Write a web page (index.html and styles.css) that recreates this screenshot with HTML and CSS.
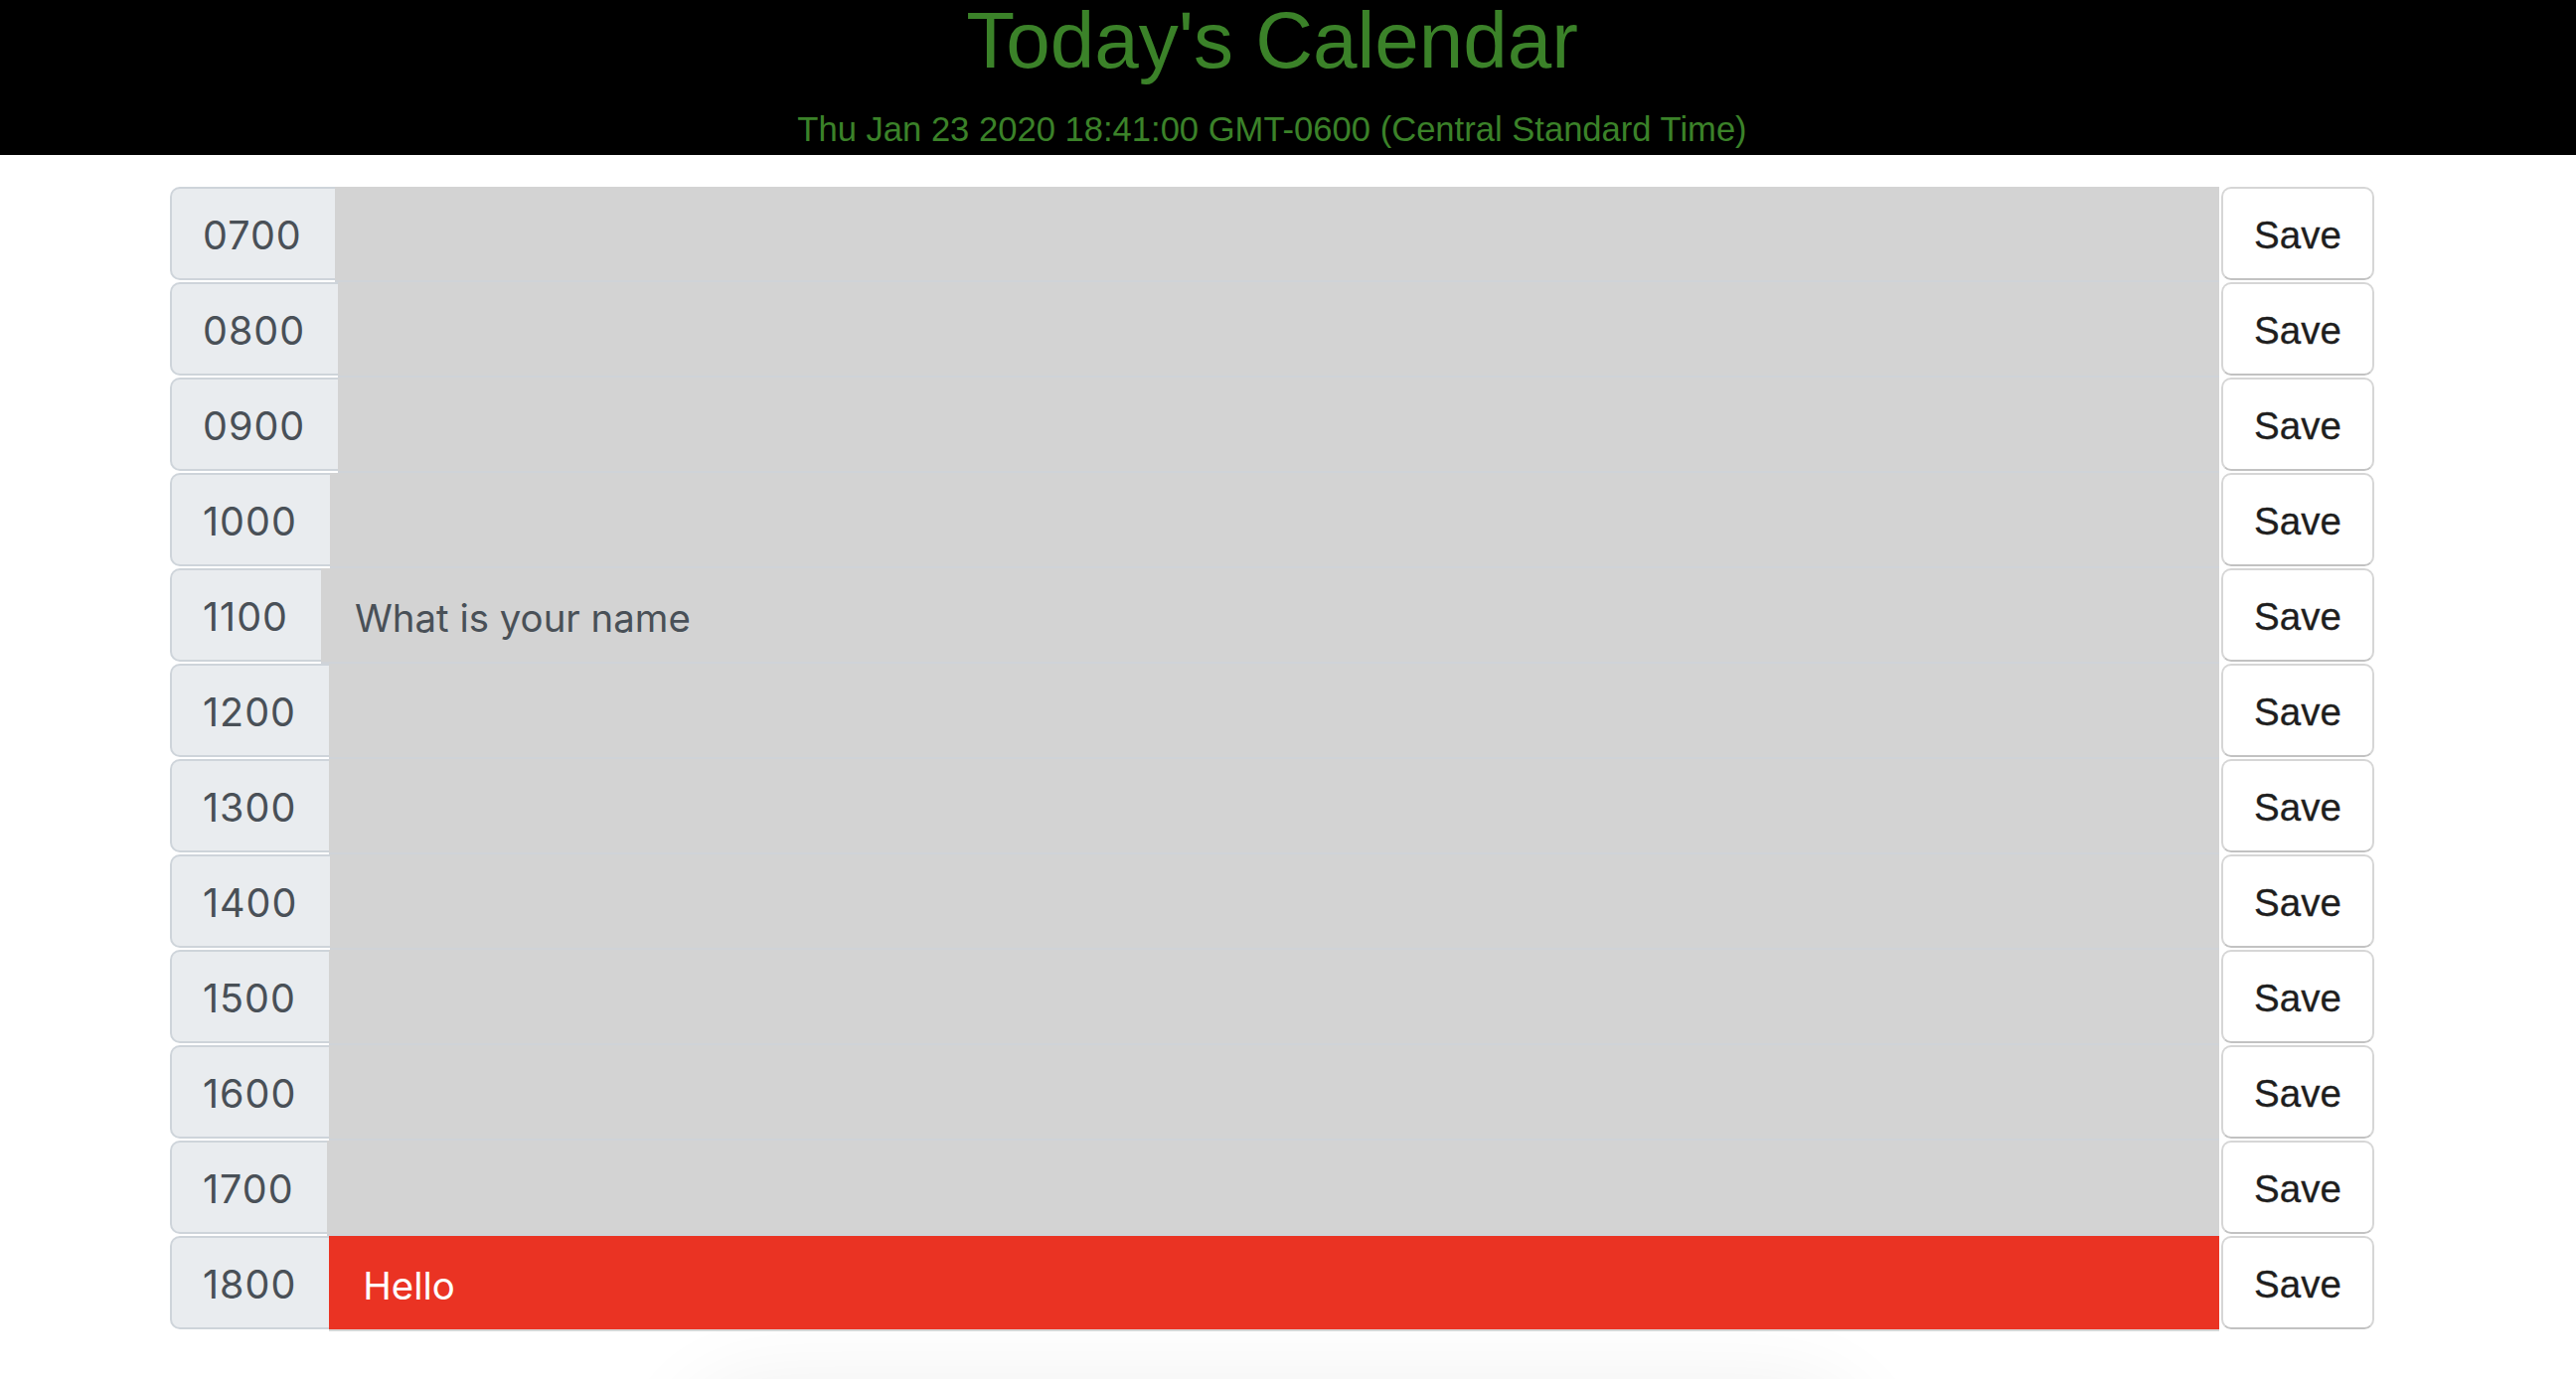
FILE: index.html
```html
<!DOCTYPE html>
<html lang="en">
<head>
<meta charset="utf-8">
<title>Work Day Scheduler</title>
<link rel="stylesheet" href="styles.css">
</head>
<body>
<header class="jumbotron">
  <div class="jumbotron-inner">
    <h1 class="display-title">Today's Calendar</h1>
    <p class="lead">Thu Jan 23 2020 18:41:00 GMT-0600 (Central Standard Time)</p>
  </div>
</header>
<main class="page">
  <div class="container">
    <div class="time-block"><span class="hour">0700</span><textarea class="description past"></textarea><button class="saveBtn">Save</button></div>
    <div class="time-block"><span class="hour">0800</span><textarea class="description past"></textarea><button class="saveBtn">Save</button></div>
    <div class="time-block"><span class="hour">0900</span><textarea class="description past"></textarea><button class="saveBtn">Save</button></div>
    <div class="time-block"><span class="hour">1000</span><textarea class="description past"></textarea><button class="saveBtn">Save</button></div>
    <div class="time-block"><span class="hour">1100</span><textarea class="description past">What is your name</textarea><button class="saveBtn">Save</button></div>
    <div class="time-block"><span class="hour">1200</span><textarea class="description past"></textarea><button class="saveBtn">Save</button></div>
    <div class="time-block"><span class="hour">1300</span><textarea class="description past"></textarea><button class="saveBtn">Save</button></div>
    <div class="time-block"><span class="hour">1400</span><textarea class="description past"></textarea><button class="saveBtn">Save</button></div>
    <div class="time-block"><span class="hour">1500</span><textarea class="description past"></textarea><button class="saveBtn">Save</button></div>
    <div class="time-block"><span class="hour">1600</span><textarea class="description past"></textarea><button class="saveBtn">Save</button></div>
    <div class="time-block"><span class="hour">1700</span><textarea class="description past"></textarea><button class="saveBtn">Save</button></div>
    <div class="time-block"><span class="hour">1800</span><textarea class="description present">Hello</textarea><button class="saveBtn">Save</button></div>
  </div>
  <div class="footer-card"></div>
</main>
</body>
</html>
```
FILE: styles.css
```css
html, body {
  margin: 0;
  padding: 0;
  background: #ffffff;
  overflow: hidden;
}

body {
  font-family: "Liberation Sans", Arial, sans-serif;
}

.jumbotron {
  background: #000000;
  height: 156px;
}

.jumbotron-inner {
  width: 2560px;
  text-align: center;
  color: #3b8229;
}

.display-title {
  margin: 0;
  font-size: 80px;
  line-height: 82px;
  font-weight: 400;
}

.lead {
  margin: 23px 0 0 0;
  font-size: 34.6px;
  line-height: 50px;
}

.page {
  width: 2560px;
  padding-top: 32px;
}

.container {
  width: 2218px;
  margin: 0 auto;
  display: flex;
  flex-direction: column;
}

.time-block {
  display: flex;
  align-items: flex-start;
  height: 96px;
}

.hour {
  box-sizing: border-box;
  height: 94px;
  display: flex;
  align-items: center;
  padding: 3px 33px 0 31px;
  background: #e9ecef;
  border: 2.4px solid #ced4da;
  border-right: none;
  border-radius: 10px 0 0 10px;
  font-family: Inter, "Noto Sans", sans-serif;
  font-size: 39.5px;
  letter-spacing: 1px;
  color: #495057;
}

.description {
  box-sizing: border-box;
  flex: 1;
  height: 96px;
  margin: 0;
  padding: 22px 30px 0 34px;
  border: none;
  border-bottom: 2.6px solid #cfd3d8;
  background: #d3d3d3;
  font-family: Inter, "Noto Sans", sans-serif;
  font-size: 38.4px;
  line-height: 1.5;
  color: #495057;
  resize: none;
  outline: none;
  overflow: hidden;
}

.description.present {
  background: #ea3323;
  color: #ffffff;
  border-bottom-color: #d6d6d6;
}

.saveBtn {
  box-sizing: border-box;
  width: 154px;
  height: 94px;
  margin-left: 2px;
  padding: 3px 0 0 0;
  background: #ffffff;
  border: 2px solid #d6d6d6;
  border-bottom-color: #c2c2c2;
  border-radius: 10px;
  font-family: "Liberation Sans", Arial, sans-serif;
  font-size: 38.5px;
  color: #1e1e1e;
  -webkit-text-stroke: 0.3px #1e1e1e;
}

.footer-card {
  width: 1150px;
  height: 200px;
  margin: 75px auto 0 auto;
  background: #ffffff;
  box-shadow: 0 0 90px 20px rgba(0, 0, 0, 0.07);
  border-radius: 60px;
}
```
